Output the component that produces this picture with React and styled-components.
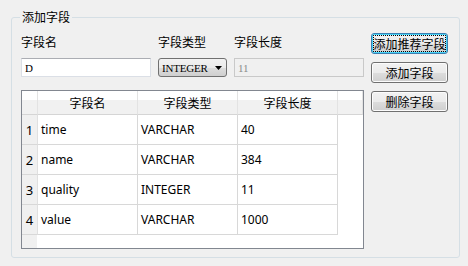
import React from 'react'
import styled, { createGlobalStyle, css } from 'styled-components'

const GlobalStyle = createGlobalStyle`
  html, body {
    margin: 0;
    padding: 0;
    background: #f0f0f0;
  }
  body {
    font-family: "Noto Sans CJK SC", "Noto Sans", sans-serif;
    font-size: 12px;
    color: #000;
  }
  * { box-sizing: border-box; }
`

/* ── Group box ─────────────────────────────── */
const GroupBox = styled.fieldset`
  width: 449px;
  margin: 9px 0 0 11px;
  padding: 8px 11px 8px 9px;
  border: 1px solid #d5dfe5;
  border-radius: 3px;
  min-width: 0;
`
const Legend = styled.legend`
  padding: 0 2px;
  margin-left: -1px;
  font-size: 12px;
  line-height: 16px;
`
const Body = styled.div`
  display: flex;
  gap: 7px;
  align-items: flex-start;
`

/* ── Left side: form + table ───────────────── */
const FormGrid = styled.div`
  width: 343px;
  display: grid;
  grid-template-columns: 130px 69px 130px;
  column-gap: 7px;
  row-gap: 7px;
`
const Label = styled.div`
  font-size: 12px;
  line-height: 18px;
  height: 18px;
  white-space: nowrap;
`
const fieldText = css`
  font-family: "Liberation Serif", serif;
  font-size: 11px;
  letter-spacing: -0.2px;
`
const TextInput = styled.input`
  ${fieldText}
  height: 19px;
  width: 100%;
  padding: 0 3px;
  margin: 0;
  border: 1px solid #dbdfe6;
  border-top-color: #abadb3;
  background: ${({ disabled }) => (disabled ? '#f0f0f0' : '#fff')};
  color: ${({ disabled }) => (disabled ? '#8a8a8a' : '#000')};
  border-color: ${({ disabled }) => (disabled ? '#c9c9c9' : undefined)};
  outline: none;
`
const Combo = styled.div`
  ${fieldText}
  height: 19px;
  display: flex;
  align-items: center;
  justify-content: space-between;
  padding: 0 4px 0 3px;
  border: 1px solid #707070;
  border-radius: 3px;
  background: linear-gradient(#f2f2f2 0%, #ebebeb 50%, #dddddd 51%, #cfcfcf 100%);
`
const TableFrame = styled.div`
  grid-column: 1 / -1;
  margin-top: 6px;
  height: 159px;
  border: 1px solid #828790;
  background: linear-gradient(to right, #f0f0f0 0 15px, #ffffff 15px);
  overflow: hidden;
`
const Table = styled.table`
  border-collapse: separate;
  border-spacing: 0;
  table-layout: fixed;
  width: 341px;
`
const HeadCell = styled.th`
  height: 24px;
  padding: 0;
  font-weight: normal;
  font-size: 12px;
  text-align: center;
  border-right: 1px solid #e3e3e3;
  border-bottom: 1px solid #d5d5d5;
  background: linear-gradient(#ffffff 0%, #ffffff 38%, #f1f1f1 40%, #f1f1f1 100%);
  white-space: nowrap;
`
const RowHead = styled.th`
  height: 30px;
  padding: 0;
  font-weight: normal;
  font-family: "Noto Sans", sans-serif;
  font-size: 13px;
  text-align: center;
  background: #f0f0f0;
  border-right: 1px solid #e0e0e0;
  border-bottom: 1px solid #d8d8d8;
`
const Cell = styled.td`
  height: 30px;
  padding: 0 0 0 3px;
  font-family: "Noto Sans", "Noto Sans CJK SC", sans-serif;
  font-size: 12px;
  border-right: 1px solid ${({ $blank }) => ($blank ? 'transparent' : '#d8d8d8')};
  border-bottom: 1px solid ${({ $blank }) => ($blank ? 'transparent' : '#d8d8d8')};
  background: #fff;
  white-space: nowrap;
`

/* ── Right side: buttons ───────────────────── */
const ButtonColumn = styled.div`
  width: 78px;
  display: flex;
  flex-direction: column;
  gap: 8px;
`
const Button = styled.button`
  height: 21px;
  width: 100%;
  padding: 0;
  font-family: "Noto Sans CJK SC", sans-serif;
  font-size: 12px;
  line-height: 1;
  color: #000;
  border: 1px solid ${({ $focused }) => ($focused ? '#3c7fb1' : '#707070')};
  border-radius: 3px;
  background: linear-gradient(#f2f2f2 0%, #ebebeb 50%, #dddddd 51%, #cfcfcf 100%);
  box-shadow: ${({ $focused }) => ($focused ? 'inset 0 0 0 1px #48d4f8' : 'inset 0 0 0 1px #fcfcfc')};
  outline: ${({ $focused }) => ($focused ? '1px dotted #000' : 'none')};
  outline-offset: -3px;
  white-space: nowrap;
`

const Arrow = () => (
  <svg width="7" height="4" viewBox="0 0 7 4">
    <path d="M0 0h7L3.5 4z" fill="#000" />
  </svg>
)

const FIELDS = [
  { name: 'time', type: 'VARCHAR', length: '40' },
  { name: 'name', type: 'VARCHAR', length: '384' },
  { name: 'quality', type: 'INTEGER', length: '11' },
  { name: 'value', type: 'VARCHAR', length: '1000' },
]

export default function App() {
  return (
    <>
      <GlobalStyle />
      <GroupBox>
        <Legend>添加字段</Legend>
        <Body>
          <FormGrid>
            <Label>字段名</Label>
            <Label>字段类型</Label>
            <Label>字段长度</Label>
            <TextInput readOnly value="D" />
            <Combo>
              <span>INTEGER</span>
              <Arrow />
            </Combo>
            <TextInput disabled value="11" />
            <TableFrame>
              <Table>
                <colgroup>
                  <col style={{ width: 16 }} />
                  <col style={{ width: 100 }} />
                  <col style={{ width: 100 }} />
                  <col style={{ width: 100 }} />
                  <col />
                </colgroup>
                <thead>
                  <tr>
                    <HeadCell />
                    <HeadCell>字段名</HeadCell>
                    <HeadCell>字段类型</HeadCell>
                    <HeadCell>字段长度</HeadCell>
                    <HeadCell />
                  </tr>
                </thead>
                <tbody>
                  {FIELDS.map((f, i) => (
                    <tr key={f.name}>
                      <RowHead>{i + 1}</RowHead>
                      <Cell>{f.name}</Cell>
                      <Cell>{f.type}</Cell>
                      <Cell>{f.length}</Cell>
                      <Cell $blank />
                    </tr>
                  ))}
                </tbody>
              </Table>
            </TableFrame>
          </FormGrid>
          <ButtonColumn>
            <Button $focused>添加推荐字段</Button>
            <Button>添加字段</Button>
            <Button>删除字段</Button>
          </ButtonColumn>
        </Body>
      </GroupBox>
    </>
  )
}
